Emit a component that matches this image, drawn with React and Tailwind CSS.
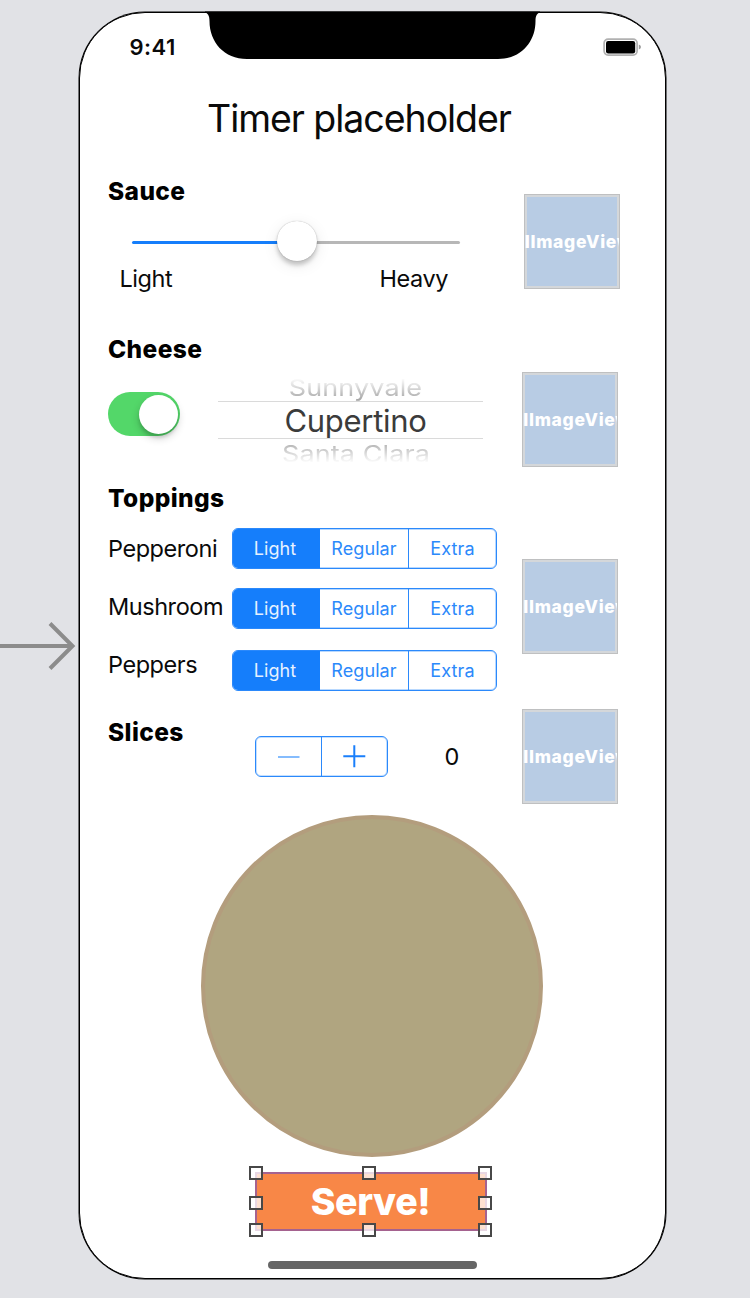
import React from "react";

const TOPPINGS = [
  { name: "Pepperoni", row: "mt-[15px]", label: "mt-1.5" },
  { name: "Mushroom", row: "mt-[19px]", label: "mt-1" },
  { name: "Peppers", row: "mt-[21px]", label: "mt-0" },
];

function Heading({ children, className = "" }) {
  return (
    <h2 className={`text-[24.5px] leading-[30px] font-extrabold tracking-[0.4px] text-black ${className}`}>
      {children}
    </h2>
  );
}

function Label({ children, className = "" }) {
  return (
    <span className={`text-[23.5px] leading-[30px] tracking-[-0.45px] whitespace-nowrap ${className}`}>
      {children}
    </span>
  );
}

function StatusBar() {
  return (
    <div className="flex h-[46px] items-start">
      <div className="mt-[22px] w-[122px] pl-[49.5px] text-[22px] leading-6 font-semibold tracking-[0.5px] whitespace-nowrap">
        9:41
      </div>
      <svg className="-mt-0.5 h-12 w-[341px] shrink-0" viewBox="0 0 341 48" aria-hidden="true">
        <path d="M3 0.6H338V1.6C335.5 2 333.5 4.5 333.5 10C333.5 31 319 48 296 48H45C22 48 7.5 31 7.5 10C7.5 4.5 5.5 2 3 1.6Z" fill="#000" />
      </svg>
      <svg className="mt-[24px] ml-[60px] h-5 w-[39px] shrink-0" viewBox="0 0 39 20" aria-hidden="true">
        <rect x="1.1" y="2.1" width="33" height="16" rx="4" fill="#fff" stroke="#b1b1b1" strokeWidth="1.7" />
        <rect x="3" y="4" width="29.2" height="12.4" rx="2.2" fill="#000" />
        <path d="M35.8 7.6q2.2.7 2.2 2.5t-2.2 2.5z" fill="#9c9c9c" />
      </svg>
    </div>
  );
}

function Slider() {
  return (
    <div className="mt-[15px] ml-6 flex h-10 w-[328px] items-center">
      <div className="mt-[3px] h-[3px] w-[145.5px] rounded-l-full bg-[#157efb]" />
      <div className="z-10 -mx-px size-10 shrink-0 rounded-full bg-white shadow-[0_0_1px_rgba(0,0,0,0.35),0_4px_4px_rgba(0,0,0,0.2),0_4px_16px_rgba(0,0,0,0.09)]" />
      <div className="mt-[3px] h-[3px] flex-1 rounded-r-full bg-[#b7b7b7]" />
    </div>
  );
}

function Toggle() {
  return (
    <div className="mt-4 flex h-11 w-[72px] items-center justify-end rounded-full bg-[#53d769] pr-[2px]">
      <div className="size-[39px] rounded-full bg-white shadow-[0_4px_8px_rgba(0,0,0,0.2),0_4px_3px_rgba(0,0,0,0.1)]" />
    </div>
  );
}

function Picker() {
  return (
    <div className="ml-[38px] flex h-[90px] w-[265px] flex-col overflow-hidden text-center whitespace-nowrap">
      <div className="flex h-[25px] items-end justify-center overflow-hidden [mask-image:linear-gradient(to_bottom,transparent_2px,black_25px)]">
        <span className="translate-x-[5px] translate-y-[4px] scale-y-[0.85] text-[27px] leading-[34px] tracking-[0.1px] text-[#a2a2a2]">
          Sunnyvale
        </span>
      </div>
      <div className="h-[38px] border-y border-[#dadada] pl-[10px] text-[31px] leading-[38px] tracking-[-0.3px] text-[#3b3b3b]">
        Cupertino
      </div>
      <div className="flex h-[27px] items-start justify-center overflow-hidden [mask-image:linear-gradient(to_bottom,black_0px,transparent_24px)]">
        <span className="translate-x-[5.5px] -translate-y-[2px] scale-y-[0.85] text-[27px] leading-[34px] tracking-[0.1px] text-[#a2a2a2]">
          Santa Clara
        </span>
      </div>
    </div>
  );
}

function Segmented() {
  return (
    <div className="flex h-[41px] w-[265px] overflow-hidden rounded-[6px] border border-[#2b89fb] text-[18px] leading-[39px] tracking-[0.1px] text-[#2b89fb] shadow-[inset_0_0_0_1px_rgba(21,126,251,0.3)]">
      <div className="w-[87px] bg-[#157efb] pr-[3px] text-center text-[#e6f1ff]">Light</div>
      <div className="w-[89px] border-r border-[#2b89fb] text-center">Regular</div>
      <div className="flex-1 text-center">Extra</div>
    </div>
  );
}

function Stepper() {
  return (
    <div className="mt-[18px] flex h-[41px] w-[133px] rounded-[6px] border border-[#2b89fb] shadow-[inset_0_0_0_1px_rgba(21,126,251,0.25)]">
      <div className="flex w-[66px] items-center justify-center border-r border-[#2b89fb]">
        <svg className="size-[22px]" viewBox="0 0 22 22" aria-hidden="true">
          <path d="M-.5 11H21.5" stroke="#85bcfd" strokeWidth="2" />
        </svg>
      </div>
      <div className="flex flex-1 items-center justify-center">
        <svg className="size-[22px] overflow-visible" viewBox="0 0 22 22" aria-hidden="true">
          <path d="M-.7 10.3H21.3M10.3 -.7V21.3" stroke="#1a7ffb" strokeWidth="2" />
        </svg>
      </div>
    </div>
  );
}

function ImageView({ className = "" }) {
  return (
    <div
      className={`flex h-[95px] w-24 items-center justify-center overflow-hidden border border-[#bfc0c1] bg-[#b8cce4] text-[17.5px] leading-[22px] font-extrabold tracking-[0.7px] text-white shadow-[inset_0_0_0_2px_#d4d7da] ${className}`}
    >
      <span className="ml-px shrink-0">UIImageView</span>
    </div>
  );
}

const HANDLES = [
  "-left-[6px] -top-[6px]",
  "left-[107px] -top-[6px]",
  "-right-[5px] -top-[6px]",
  "-left-[6px] top-[24px]",
  "-right-[5px] top-[24px]",
  "-left-[6px] -bottom-[6px]",
  "left-[107px] -bottom-[6px]",
  "-right-[5px] -bottom-[6px]",
];

function ServeButton() {
  return (
    <div className="relative mt-[15px] ml-[175px] h-[59px] w-[232px]">
      <div className="h-full border-2 border-[#a5628f] bg-[#f88747] pr-px text-center text-[37.5px] leading-[56px] font-extrabold tracking-[-0.4px] text-white">
        Serve!
      </div>
      {HANDLES.map((pos) => (
        <span key={pos} className={`absolute size-[14px] border-2 border-[#484848] bg-white/75 bg-clip-padding ${pos}`} />
      ))}
    </div>
  );
}

export default function App() {
  return (
    <div className="flex h-[1298px] w-[750px] overflow-hidden bg-[#e1e2e6] font-['Inter',sans-serif] text-[#0a0a0a]">
      <div className="w-[79px] pt-[620px]">
        <svg className="h-[52px] w-[79px]" viewBox="0 0 79 52" fill="none" stroke="#8c8c8c" strokeWidth="4" aria-hidden="true">
          <path d="M0 26H72M50 3.5L72.5 26L50 48.5" />
        </svg>
      </div>
      <div className="mt-3 h-[1267px] w-[587px] rounded-[66px] border border-black bg-white shadow-[0_0_0_0.5px_#000]">
        <StatusBar />
        <h1 className="mt-9 pl-[127px] text-[37.5px] leading-[48px] tracking-[-1.05px] whitespace-nowrap">
          Timer placeholder
        </h1>
        <div className="-mt-px flex pb-[11px]">
          <div className="w-[442px] pl-7">
            <Heading className="mt-[34px]">Sauce</Heading>
            <Slider />
            <div className="mt-[3px] flex pl-[11.5px]">
              <Label className="w-[260px]">Light</Label>
              <Label>Heavy</Label>
            </div>
            <Heading className="mt-10">Cheese</Heading>
            <div className="mt-3 flex">
              <Toggle />
              <Picker />
            </div>
            <Heading className="mt-[17px]">Toppings</Heading>
            {TOPPINGS.map((t) => (
              <div key={t.name} className={`flex h-[41px] items-start ${t.row}`}>
                <Label className={`w-[124px] ${t.label}`}>{t.name}</Label>
                <Segmented />
              </div>
            ))}
            <div className="mt-[27px] flex items-start">
              <Heading className="-mt-px w-[147px]">Slices</Heading>
              <Stepper />
              <Label className="mt-6 ml-[56.5px]">0</Label>
            </div>
          </div>
          <div>
            <ImageView className="mt-[52px] ml-[1.5px]" />
            <ImageView className="mt-[83px]" />
            <ImageView className="mt-[92px]" />
            <ImageView className="mt-[55px]" />
          </div>
        </div>
        <div className="ml-[120.5px] size-[342px] rounded-full border-4 border-[#b39d7d] bg-[#b0a580]" />
        <ServeButton />
        <div className="mt-[30px] ml-[188px] h-2 w-[209px] rounded-full bg-[#666]" />
      </div>
    </div>
  );
}
